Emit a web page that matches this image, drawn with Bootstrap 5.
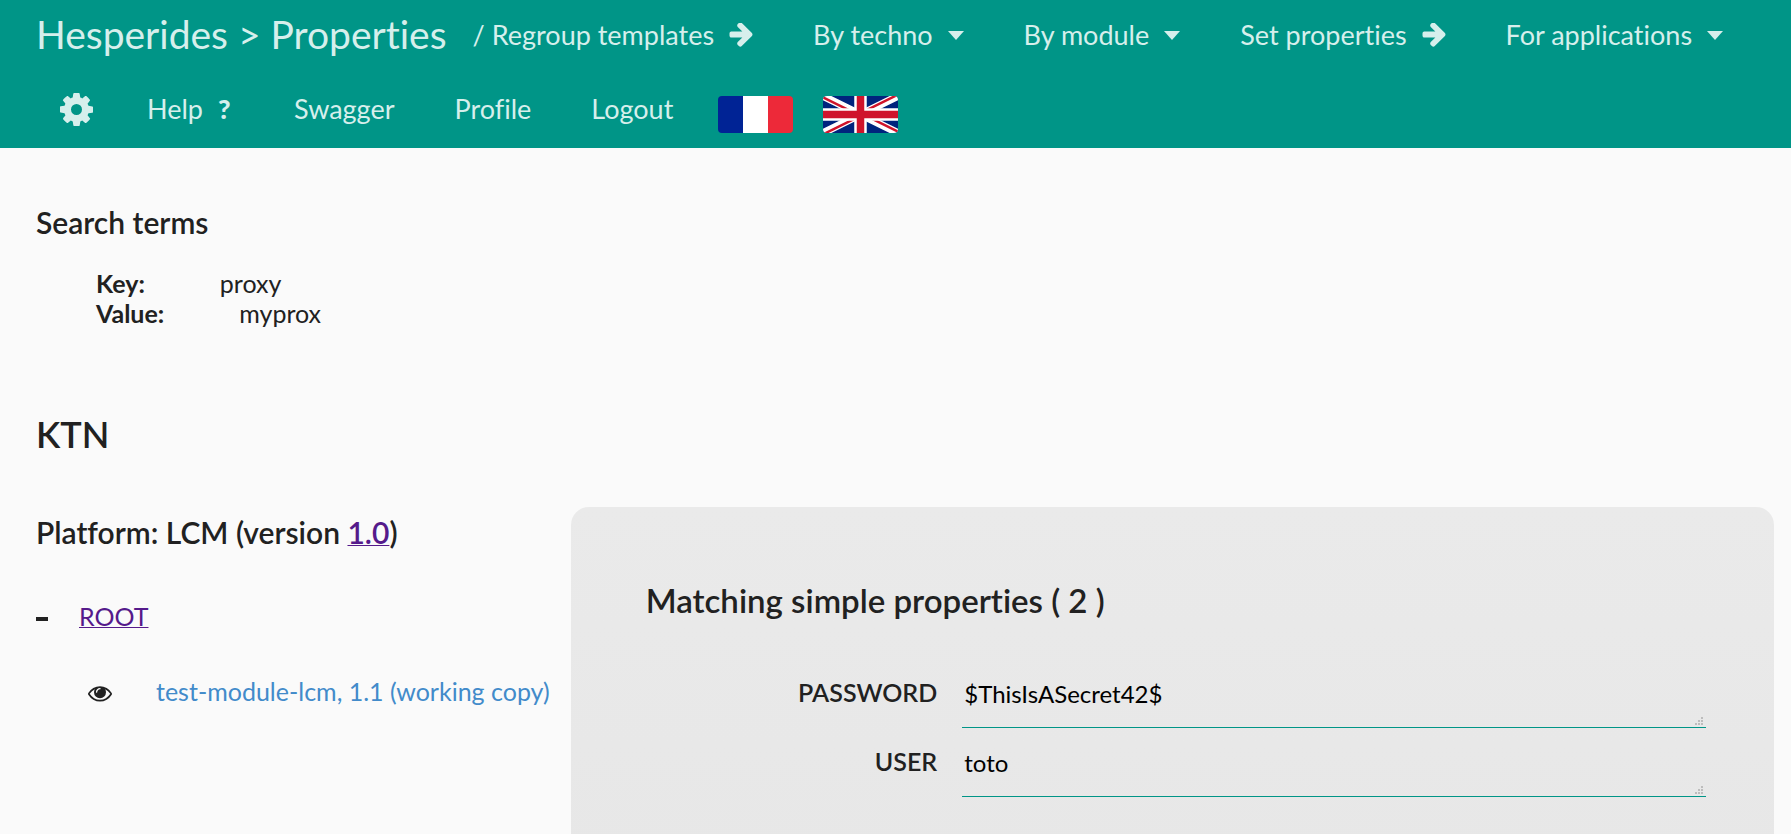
<!DOCTYPE html>
<html lang="en">
<head>
<meta charset="utf-8">
<meta name="viewport" content="width=device-width, initial-scale=1">
<title>Hesperides - Properties</title>
<link rel="stylesheet" href="https://cdn.jsdelivr.net/npm/bootstrap@5.3.0/dist/css/bootstrap.min.css">
<style>
  :root { --teal: #009587; --ink: #212121; }
  body { font: 25px/30px Lato, "Open Sans", sans-serif; color: var(--ink); background: #fafafa; }
  body, button, textarea { font-variant-ligatures: none; }

  /* top bar */
  .topbar { background: var(--teal); padding: 0 0 0 36px; font-size: 27px; color: #d6efec; }
  .topbar a, .topbar button { color: inherit; text-decoration: none; background: none; border: 0; }
  .topbar-brand { font-size: 39px; line-height: 48px; min-height: 68px; margin-right: -4px; }
  .topbar-item { min-height: 68px; margin-bottom: 6px; padding: 2px 30px 0; gap: 15px; line-height: 34px; }
  .topbar-cog { padding: 2px 24px 0; }
  .topbar-flag { padding: 13px 15px 0; }
  .flag { width: 75px; height: 37px; border-radius: 4px; }
  .topbar .dropdown-toggle::after { margin: 0; border-top: 9px solid; border-right: 8px solid transparent; border-left: 8px solid transparent; }
  .help-mark { min-width: 16px; font-weight: 900; }

  /* page body */
  main { padding: 54px 17px 0 36px; }
  h2, h3, h4 { margin: 0; font-weight: 600; }
  h3, h4 { font-size: 30px; line-height: 40px; }
  .terms { margin: 26px 0 82px 60px; }
  .terms dt { margin-right: 75px; }
  .terms dd { margin: 0; }
  .app-name { font-size: 36px; line-height: 48px; margin-bottom: 49px; }
  .results { display: grid; grid-template-columns: 4fr 9fr; }
  .platform { padding-top: 5px; }
  .visited, .visited:hover { color: #551a8b; text-decoration-thickness: 1px; }
  .tree-root { margin-top: 49px; gap: 31px; }
  .tree-toggle { width: 12px; height: 4px; margin-top: 6px; padding: 0; border: 0; background: var(--ink); }
  .tree-leaf { margin: 45px 0 0 52px; gap: 44px; }
  .tree-leaf a { color: #428bca; text-decoration: none; }
  .tree-leaf svg { margin-top: 4px; }

  /* matching properties */
  .matches { padding: 73px 68px 56px 75px; border-radius: 18px; background: linear-gradient(#eaeaea, #e7e7e7); }
  .matches h3 { font-size: 33px; margin-bottom: 50px; }
  .prop { display: grid; grid-template-columns: 20fr 47fr; margin-bottom: 11px; }
  .prop label { padding: 7px 25px 0 0; text-align: right; font-weight: 600; }
  .prop textarea { display: block; width: 100%; height: 58px; padding: 9px 2px 0; border: 0; border-bottom: 1px solid var(--teal); border-radius: 0; background: none; color: #000; font-size: 24px; line-height: 30px; resize: none; overflow: hidden; }
  .grip { right: 3px; bottom: 3px; pointer-events: none; }
</style>
</head>
<body>
<nav class="topbar d-flex flex-wrap align-items-start" aria-label="Main">
  <a class="topbar-brand d-flex align-items-center" href="#">Hesperides &gt; Properties</a>
  <a class="topbar-item d-flex align-items-center" href="#">/ Regroup templates
    <svg width="24" height="24" viewBox="128 224 1472 1536" fill="currentColor" aria-hidden="true"><path d="M1600 960q0 54-37 91l-651 651q-39 37-91 37-51 0-90-37l-75-75q-38-38-38-91t38-91l293-293h-704q-52 0-84.500-37.500t-32.500-90.500v-128q0-53 32.500-90.500t84.500-37.500h704l-293-294q-38-36-38-90t38-90l75-75q38-38 90-38 53 0 91 38l651 651q37 35 37 90z"/></svg></a>
  <button type="button" class="topbar-item dropdown-toggle d-flex align-items-center">By techno</button>
  <button type="button" class="topbar-item dropdown-toggle d-flex align-items-center">By module</button>
  <a class="topbar-item d-flex align-items-center" href="#">Set properties
    <svg width="24" height="24" viewBox="128 224 1472 1536" fill="currentColor" aria-hidden="true"><path d="M1600 960q0 54-37 91l-651 651q-39 37-91 37-51 0-90-37l-75-75q-38-38-38-91t38-91l293-293h-704q-52 0-84.500-37.500t-32.500-90.500v-128q0-53 32.500-90.500t84.500-37.500h704l-293-294q-38-36-38-90t38-90l75-75q38-38 90-38 53 0 91 38l651 651q37 35 37 90z"/></svg></a>
  <button type="button" class="topbar-item dropdown-toggle d-flex align-items-center">For applications</button>
  <button type="button" class="topbar-item topbar-cog d-flex align-items-center" aria-label="Settings">
    <svg width="33" height="33" viewBox="128 128 1536 1536" fill="currentColor" aria-hidden="true"><path d="M1152 896q0-106-75-181t-181-75-181 75-75 181 75 181 181 75 181-75 75-181zm512-109v222q0 12-8 23t-20 13l-185 28q-19 54-39 91 35 50 107 138 10 12 10 25t-9 23q-27 37-99 108t-94 71q-12 0-26-9l-138-108q-44 23-91 38-16 136-29 186-7 28-36 28h-222q-14 0-24.500-8.500t-11.500-21.500l-28-184q-49-16-90-37l-141 107q-10 9-25 9-14 0-25-11-126-114-165-168-7-10-7-23 0-12 8-23 15-21 51-66.500t54-70.500q-27-50-41-99l-183-27q-13-2-21-12.500t-8-23.500v-222q0-12 8-23t19-13l186-28q14-46 39-92-40-57-107-138-10-12-10-24 0-10 9-23 26-36 98.500-107.500t94.500-71.500q13 0 26 10l138 107q44-23 91-38 16-136 29-186 7-28 36-28h222q14 0 24.500 8.500t11.500 21.500l28 184q49 16 90 37l142-107q9-9 24-9 13 0 25 10 129 119 165 170 7 8 7 22 0 12-8 23-15 21-51 66.500t-54 70.500q26 50 41 98l183 28q13 2 21 12.500t8 23.500z"/></svg></button>
  <a class="topbar-item d-flex align-items-center" href="#">Help <span class="help-mark">?</span></a>
  <a class="topbar-item d-flex align-items-center" href="#">Swagger</a>
  <a class="topbar-item d-flex align-items-center" href="#">Profile</a>
  <a class="topbar-item d-flex align-items-center" href="#">Logout</a>
  <button type="button" class="topbar-item topbar-flag d-flex align-items-center" aria-label="Français">
    <svg class="flag" viewBox="0 0 3 2" preserveAspectRatio="none" aria-hidden="true"><path fill="#002395" d="M0 0h1v2H0z"/><path fill="#fff" d="M1 0h1v2H1z"/><path fill="#ed2939" d="M2 0h1v2H2z"/></svg></button>
  <button type="button" class="topbar-item topbar-flag d-flex align-items-center" aria-label="English">
    <svg class="flag" viewBox="0 0 60 30" preserveAspectRatio="none" aria-hidden="true">
      <clipPath id="quarters"><path d="M30 15h30v15zv15H0zH0V0zV0h30z"/></clipPath>
      <path fill="#00247d" d="M0 0h60v30H0z"/>
      <path stroke="#fff" stroke-width="6" d="M0 0l60 30M60 0L0 30"/>
      <path stroke="#cf142b" stroke-width="4" clip-path="url(#quarters)" d="M0 0l60 30M60 0L0 30"/>
      <path stroke="#fff" stroke-width="10" d="M30 0v30M0 15h60"/>
      <path stroke="#cf142b" stroke-width="6" d="M30 0v30M0 15h60"/>
    </svg></button>
</nav>

<main>
  <h4>Search terms</h4>
  <dl class="terms">
    <div class="d-flex"><dt>Key:</dt><dd>proxy</dd></div>
    <div class="d-flex"><dt>Value:</dt><dd>myprox</dd></div>
  </dl>

  <h2 class="app-name">KTN</h2>

  <div class="results">
    <section class="platform">
      <h4>Platform: LCM (version <a class="visited" href="#">1.0</a>)</h4>
      <div class="tree-root d-flex align-items-center">
        <button type="button" class="tree-toggle" aria-label="Collapse"></button>
        <a class="visited" href="#">ROOT</a>
      </div>
      <div class="tree-leaf d-flex align-items-center">
        <svg width="24" height="24" viewBox="0 0 1792 1792" fill="currentColor" aria-hidden="true"><path d="M1664 960q-152-236-381-353 61 104 61 225 0 185-131.500 316.500t-316.500 131.500-316.500-131.500-131.500-316.500q0-121 61-225-229 117-381 353 133 205 333.500 326.500t434.500 121.500 434.500-121.500 333.500-326.500zm-720-384q0-20-14-34t-34-14q-125 0-214.500 89.500t-89.500 214.500q0 20 14 34t34 14 34-14 14-34q0-86 61-147t147-61q20 0 34-14t14-34zm848 384q0 34-20 69-140 230-376.500 368.500t-499.500 138.500-499.500-139-376.500-368q-20-35-20-69t20-69q140-229 376.500-368t499.500-139 499.500 139 376.500 368q20 35 20 69z"/></svg>
        <a href="#">test-module-lcm, 1.1 (working copy)</a>
      </div>
    </section>

    <section class="matches">
      <h3>Matching simple properties ( 2 )</h3>
      <div class="prop">
        <label for="password">PASSWORD</label>
        <div class="position-relative">
          <textarea id="password" rows="1" spellcheck="false">$ThisIsASecret42$</textarea>
          <svg class="grip position-absolute" width="8" height="8" viewBox="0 0 8 8" fill="#bdbdbd" aria-hidden="true"><path d="M6 0h2v2H6zM6 3h2v2H6zM3 3h2v2H3zM6 6h2v2H6zM3 6h2v2H3zM0 6h2v2H0z"/></svg>
        </div>
      </div>
      <div class="prop">
        <label for="user">USER</label>
        <div class="position-relative">
          <textarea id="user" rows="1" spellcheck="false">toto</textarea>
          <svg class="grip position-absolute" width="8" height="8" viewBox="0 0 8 8" fill="#bdbdbd" aria-hidden="true"><path d="M6 0h2v2H6zM6 3h2v2H6zM3 3h2v2H3zM6 6h2v2H6zM3 6h2v2H3zM0 6h2v2H0z"/></svg>
        </div>
      </div>
    </section>
  </div>
</main>
<script src="https://cdn.jsdelivr.net/npm/bootstrap@5.3.0/dist/js/bootstrap.bundle.min.js"></script>
</body>
</html>
